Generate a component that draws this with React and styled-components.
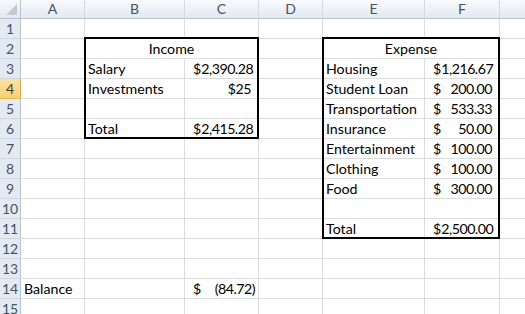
import React from "react";
import styled, { createGlobalStyle, css } from "styled-components";

const Global = createGlobalStyle`
  html, body { margin: 0; padding: 0; background: #fff; overflow: hidden; }
  body { font-family: "Lato", "Liberation Sans", sans-serif; }
`;

const COLS = ["A", "B", "C", "D", "E", "F", "G"];
const VISIBLE_HEADS = ["A", "B", "C", "D", "E", "F"];
const ACTIVE_ROW = 4;

const Sheet = styled.div`
  display: grid;
  grid-template-columns: 21px 64px 100px 74px 64px 102px 75px 64px;
  grid-template-rows: 19px repeat(15, 20px);
  width: 564px;
  font-family: "Lato", "Liberation Sans", sans-serif;
  font-size: 14.2px;
  color: #000;
`;

const Corner = styled.div`
  box-sizing: border-box;
  background: linear-gradient(#f7f9fb, #e4e9f0);
  border-right: 1px solid #b9c3cf;
  border-bottom: 1px solid #b9c3cf;
  display: flex;
  align-items: flex-end;
  justify-content: flex-end;
  padding: 0 3px 3px 0;
`;

const ColHead = styled.div`
  box-sizing: border-box;
  background: linear-gradient(#f8fafc, #e3e9f0);
  border-right: 1px solid #d3dae3;
  border-bottom: 1px solid #b9c3cf;
  color: #44526a;
  display: flex;
  align-items: center;
  justify-content: center;
  font-size: 14px;
  line-height: 1;
`;

const RowHead = styled.div`
  box-sizing: border-box;
  border-right: 1px solid #b9c3cf;
  border-bottom: 1px solid #d0d7e0;
  display: flex;
  align-items: center;
  justify-content: center;
  font-size: 14px;
  line-height: 1;
  ${(p) =>
    p.$active
      ? css`
          background: linear-gradient(#fbe2a2, #f7d271);
          color: #3a3a3a;
          border-bottom: 1px solid #f0b64c;
          border-right: 1px solid #e5a94a;
        `
      : css`
          background: #e4eaf2;
          color: #44526a;
        `}
`;

const Cell = styled.div`
  box-sizing: border-box;
  border-right: 1px solid #dadcdf;
  border-bottom: 1px solid #dadcdf;
  display: flex;
  align-items: center;
  padding: 1px 3px 0 3px;
  white-space: nowrap;
  overflow: visible;
  line-height: 1;
  grid-column: ${(p) => p.$col};
  grid-row: ${(p) => p.$row};
  justify-content: ${(p) =>
    p.$align === "center" ? "center" : p.$align === "right" ? "flex-end" : "flex-start"};
  ${(p) => p.$padRight && css`padding-right: 7px;`}
`;

const Money = styled.div`
  flex: 1;
  display: flex;
  justify-content: space-between;
  padding: 0 ${(p) => (p.$paren ? "0" : "4px")} 0 5px;
`;

const Num = styled.span`
  letter-spacing: -0.5px;
`;

const Frame = styled.div`
  grid-column: ${(p) => p.$col};
  grid-row: ${(p) => p.$row};
  border: 2px solid #000;
  margin: -2px 0 0 -1px;
  pointer-events: none;
  z-index: 2;
`;

const data = {
  2: { B: { text: "Income", align: "center", span: 2 }, E: { text: "Expense", align: "center", span: 2 } },
  3: { B: { text: "Salary" }, C: { money: "2,390.28" }, E: { text: "Housing" }, F: { money: "1,216.67" } },
  4: { B: { text: "Investments" }, C: { num: "$25", align: "right", padRight: true }, E: { text: "Student Loan" }, F: { money: "200.00" } },
  5: { E: { text: "Transportation" }, F: { money: "533.33" } },
  6: { B: { text: "Total" }, C: { money: "2,415.28" }, E: { text: "Insurance" }, F: { money: "50.00" } },
  7: { E: { text: "Entertainment" }, F: { money: "100.00" } },
  8: { E: { text: "Clothing" }, F: { money: "100.00" } },
  9: { E: { text: "Food" }, F: { money: "300.00" } },
  11: { E: { text: "Total" }, F: { money: "2,500.00" } },
  14: { A: { text: "Balance" }, C: { money: "(84.72)", paren: true } },
};

function CornerMark() {
  return (
    <svg width="11" height="11" viewBox="0 0 11 11">
      <polygon points="11,0 11,11 0,11" fill="#c3c9d1" />
    </svg>
  );
}

export default function App() {
  const cells = [];
  for (let r = 1; r <= 15; r++) {
    const gridRow = r + 1;
    cells.push(
      <RowHead key={`rh${r}`} $active={r === ACTIVE_ROW}>
        {r}
      </RowHead>
    );
    const rowData = data[r] || {};
    for (let c = 0; c < COLS.length; c++) {
      const col = COLS[c];
      const d = rowData[col];
      const span = d && d.span ? d.span : 1;
      const gridCol = `${c + 2} / span ${span}`;
      let content = null;
      if (d && d.money) {
        content = (
          <Money $paren={d.paren}>
            <span>$</span>
            <Num>{d.money}</Num>
          </Money>
        );
      } else if (d && d.num) {
        content = <Num>{d.num}</Num>;
      } else if (d) {
        content = d.text;
      }
      cells.push(
        <Cell
          key={`c${r}${col}`}
          $col={gridCol}
          $row={gridRow}
          $align={d && d.align}
          $padRight={d && d.padRight}
        >
          {content}
        </Cell>
      );
      c += span - 1;
    }
  }

  return (
    <>
      <Global />
      <Sheet>
        <Corner>
          <CornerMark />
        </Corner>
        {VISIBLE_HEADS.map((c) => (
          <ColHead key={c}>{c}</ColHead>
        ))}
        <ColHead aria-label="G" />
        {cells}
        <Frame $col="3 / 5" $row="3 / 8" />
        <Frame $col="6 / 8" $row="3 / 13" />
      </Sheet>
    </>
  );
}
